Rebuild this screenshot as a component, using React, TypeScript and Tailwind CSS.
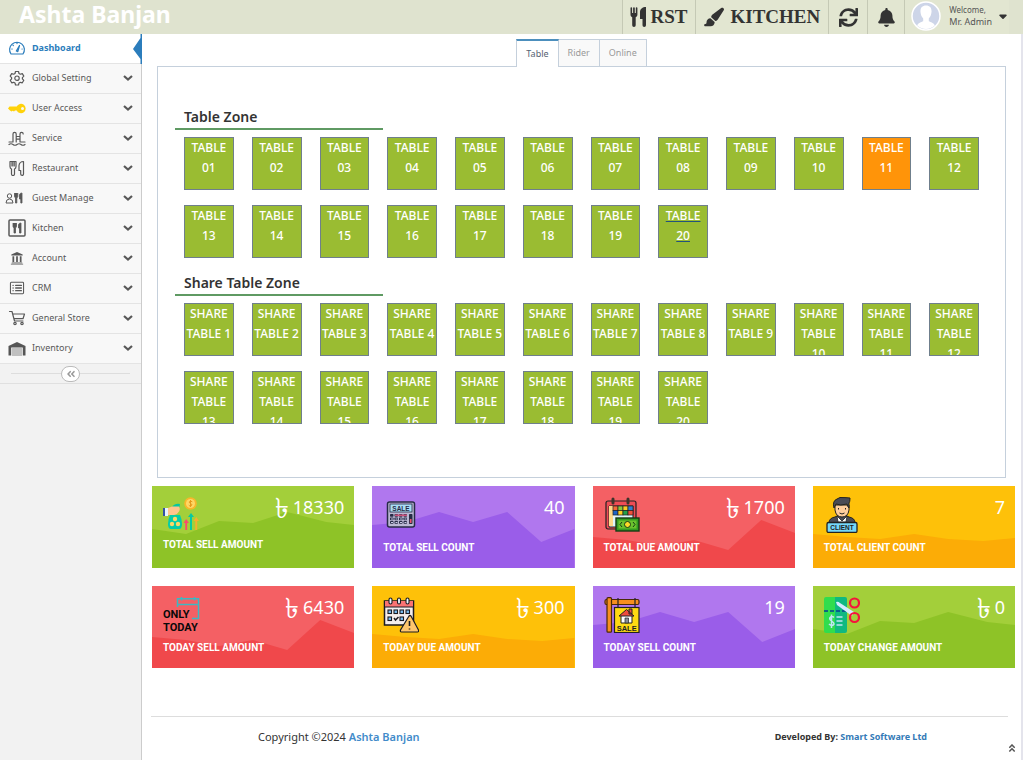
import { useState, type ReactNode } from "react";
import { FaBell, FaCaretDown, FaPaintbrush } from "react-icons/fa6";
import { FaAngleDoubleLeft, FaAngleDoubleUp, FaSync } from "react-icons/fa";

type IconProps = { className?: string };

function Cutlery({ className }: IconProps) {
  return (
    <svg viewBox="0 0 17 20" className={className} fill="currentColor" aria-hidden="true">
      <path d="M.5 1a.8.8 0 0 1 1.600 0v5h1V1a.8.8 0 0 1 1.700 0v5h1V1a.8.8 0 0 1 1.600 0v6.500c0 1.400-.7 2.300-1.700 2.800v7.900a1.700 1.700 0 0 1-3.500 0v-7.900C1.200 9.800.5 8.900.5 7.500z" />
      <path d="M10 5c0-3 2.500-5 6-5v18.200a1.700 1.700 0 0 1-3.500 0V12H10z" />
    </svg>
  );
}

function Chevron({ className }: IconProps) {
  return (
    <svg viewBox="0 0 10 6" className={className} fill="none" stroke="currentColor" strokeWidth="2.200" aria-hidden="true">
      <path d="M1 1l4 3.500L9 1" />
    </svg>
  );
}

function LineIcon({ children, className = "h-4 w-4" }: { children: ReactNode; className?: string }) {
  return (
    <svg
      viewBox="0 0 18 16"
      className={className}
      fill="none"
      stroke="currentColor"
      strokeWidth="1.200"
      strokeLinecap="round"
      strokeLinejoin="round"
      aria-hidden="true"
    >
      {children}
    </svg>
  );
}

const navIcons: Record<string, ReactNode> = {
  Dashboard: (
    <LineIcon className="h-4 w-[18px]">
      <path d="M4 14H3A7.400 7.400 0 1 1 15 14H4M9 3v.6M3.800 9h.4M5 5.200l.3.300M14 9h.2" />
      <path d="M8.300 11 11.500 5.500 9.800 11.600z" />
    </LineIcon>
  ),
  "Global Setting": (
    <LineIcon className="h-4 w-[18px]">
      <path d="M7.500 1.500h3l.5 2 1.300.7 2-.6 1.500 2.500-1.400 1.500v1.300l1.400 1.400-1.500 2.500-2-.5-1.300.7-.5 2h-3l-.5-2-1.300-.7-2 .5-1.500-2.500 1.400-1.400V7.600L2.200 6.100l1.500-2.500 2 .6L7 3.500z" />
      <circle cx="9" cy="8.200" r="2.200" />
    </LineIcon>
  ),
  "User Access": (
    <svg viewBox="0 0 18 16" className="h-4 w-[18px]" fill="#ffd20a" aria-hidden="true">
      <path
        fillRule="evenodd"
        d="M8.700 6.500A4.700 4.700 0 1 1 8.700 10.500L7 10.500 6 11.500 4.700 10.800 3.500 11.500 2 10.500 0 8.600 1.500 6.500zM14.500 7a1.500 1.500 0 1 0 0 3 1.500 1.500 0 0 0 0-3z"
      />
    </svg>
  ),
  Service: (
    <LineIcon className="h-4 w-[18px]">
      <path d="M5 5.500V4a1.600 1.600 0 0 1 3.200 0v8M12 5.500V4a1.600 1.600 0 0 1 3.200 0M12 4.500V12M8.200 6.500H12M8.200 9.200H12M5 5.500V12M1 12h4M1 14.500q2-1.500 4 0t4 0 4 0 4 0M12 12h5" />
    </LineIcon>
  ),
  Restaurant: (
    <LineIcon className="h-4 w-[18px]">
      <path d="M2 1.500v5q0 2 1.500 2.500V14a1.500 1.500 0 0 0 3 0V9Q8 8.500 8 6.500v-5H6.200V6H6V1.500H4.200V6H4V1.500zM15.500 1.500V14a1.400 1.400 0 0 1-2.800 0v-3.500H11V5.500q.5-4 4.500-4z" />
    </LineIcon>
  ),
  "Guest Manage": (
    <svg viewBox="0 0 18 14" className="-ml-[3px] h-[14px] w-[18px]" fill="none" stroke="currentColor" aria-hidden="true">
      <circle cx="4.500" cy="5" r="2.200" />
      <path d="M1 12q0-4 3.500-4T8 12z" />
      <path
        d="M9.500 2v3.500q0 1 1 1.200V12h1.300V6.700q1-.2 1-1.200V2M11.200 2v4M14.500 8V3.500Q15 2 17 2v10h-1.200V8z"
        fill="currentColor"
        strokeWidth=".8"
      />
    </svg>
  ),
  Kitchen: (
    <svg viewBox="0 0 18 18" className="h-[18px] w-[18px]" fill="none" stroke="currentColor" aria-hidden="true">
      <rect x="1" y="1" width="16" height="16" rx="1" strokeWidth="1.500" />
      <path
        d="M5 4v3.500q0 1 1 1.200V14h1.500V8.700q1-.2 1-1.200V4M6.700 4v4M10.500 9V5.500Q11 4 13 4v10h-1.500V9z"
        fill="currentColor"
        strokeWidth=".8"
      />
    </svg>
  ),
  Account: (
    <svg viewBox="0 0 16 16" className="h-[14px] w-[18px]" fill="currentColor" aria-hidden="true">
      <path d="M8 1 14.500 4v1.200h-13V4zM2.800 6h2v6.500h-2zM7 6h2v6.500H7zM11.200 6h2v6.500h-2zM2 13h12v1H2zM1 14.500h14v1H1z" />
    </svg>
  ),
  CRM: (
    <LineIcon className="h-[14px] w-[18px]">
      <rect x="1.500" y="1.500" width="15" height="13" rx="1" />
      <path d="M4.500 5h.1M7.500 5H14M4.500 8h.1M7.500 8H14M4.500 11h.1M7.500 11H14" strokeWidth="1.500" />
    </LineIcon>
  ),
  "General Store": (
    <LineIcon className="h-4 w-[18px]">
      <path d="M1.500 1.500H4l2.500 9.500H15M4.700 4H16.500L15 8.700H6" />
      <circle cx="7" cy="13.500" r="1.200" />
      <circle cx="14" cy="13.500" r="1.200" />
    </LineIcon>
  ),
  Inventory: (
    <svg viewBox="0 0 18 15" className="h-[15px] w-[18px]" aria-hidden="true">
      <path d="M9 1 17.500 5v9.500h-2.700V6.500H3.200v8H.5V5z" fill="#555" />
      <path d="M4 8h10M4 10h10M4 12h10M4 14h10" stroke="#888" />
    </svg>
  ),
};

function Sidebar() {
  return (
    <aside className="w-[142px] shrink-0 border-r border-[#ccc] bg-[#f2f2f2]">
      <nav aria-label="Main">
        <ul>
          {Object.keys(navIcons).map((label) => {
            const active = label === "Dashboard";
            return (
              <li key={label} className="border-b border-[#e4e4e4]">
                <a
                  href="#"
                  className={
                    active
                      ? "relative flex h-[29px] items-center bg-white pb-px pl-2 text-[9px] font-bold text-[#2b7dbc]"
                      : "flex h-[29px] items-center bg-[#f8f8f8] pr-2 pb-px pl-2 text-[9px] text-[#585858]"
                  }
                >
                  <span className="flex w-6 shrink-0 items-center">{navIcons[label]}</span>
                  <span className="flex-1">{label}</span>
                  {active ? (
                    <svg
                      viewBox="0 0 9 30"
                      className="absolute top-0 -right-px h-[30px] w-[9px]"
                      fill="#2b7dbc"
                      aria-hidden="true"
                    >
                      <path d="M7.500 0H9v30H7.500V25L0 15 7.500 4z" />
                    </svg>
                  ) : (
                    <Chevron className="h-[6px] w-[10px]" />
                  )}
                </a>
              </li>
            );
          })}
        </ul>
      </nav>
      <div className="flex h-5 items-center border-b border-[#e0e0e0] px-[11px]">
        <span className="h-px flex-1 bg-[#ddd]" />
        <button
          type="button"
          aria-label="Collapse sidebar"
          className="flex h-4 w-[19px] items-center justify-center rounded-full border border-[#bbb] bg-white text-[#999]"
        >
          <FaAngleDoubleLeft className="h-[10px] w-[10px]" />
        </button>
        <span className="h-px flex-1 bg-[#ddd]" />
      </div>
    </aside>
  );
}

function Header() {
  const serif =
    "flex items-center gap-1 border-l border-[#c5c9b5] pl-[7px] pr-2 font-['Liberation_Serif',serif] text-[19px] font-bold";
  return (
    <header className="flex h-[34px] items-stretch bg-[#dfe3cf] pr-[14px] text-[#333]">
      <a href="#" className="pl-[19px] text-[23px] leading-7 font-bold text-white">
        Ashta Banjan
      </a>
      <div className="ml-auto flex items-stretch bg-[#e2e6d1]">
        <a href="#" className={serif}>
          <Cutlery className="h-5 w-[17px]" />
          RST
        </a>
        <a href="#" className={serif}>
          <FaPaintbrush className="mr-[2px] h-5 w-[21px]" />
          KITCHEN
        </a>
        <button type="button" aria-label="Refresh" className="flex w-[39px] items-center justify-center border-l border-[#c5c9b5]">
          <FaSync className="h-[19px] w-[19px]" />
        </button>
        <button type="button" aria-label="Notifications" className="flex w-[37px] items-center justify-center border-l border-[#c5c9b5]">
          <FaBell className="h-[19px] w-[17px]" />
        </button>
        <button type="button" className="flex items-center border-l border-[#c5c9b5] pb-[2px] pl-[6px] text-left text-[9px] leading-3 text-[#555]">
          <svg viewBox="0 0 30 30" className="mr-2 h-[30px] w-[30px]" aria-hidden="true">
            <circle cx="15" cy="15" r="14" fill="#cdd5e8" stroke="#fff" strokeWidth="1.500" />
            <path
              d="M15 4.500c-4 0-5.800 2.600-5.500 6.500.2 3 1.400 5.200 2.700 6.500v2.700c-2 1-5 1.500-6 4.300a13 13 0 0 0 17.600 0c-1-2.800-4-3.300-6-4.300v-2.700c1.300-1.300 2.500-3.500 2.700-6.500.3-3.900-1.500-6.500-5.500-6.500z"
              fill="#fff"
            />
          </svg>
          <span>
            <span className="block text-[8px]">Welcome,</span>
            <span className="block">Mr. Admin</span>
          </span>
          <FaCaretDown className="ml-[5px] h-3 w-3 text-[#333]" />
        </button>
      </div>
    </header>
  );
}

function Zone({ title, tables, busy, hovered }: { title: string; tables: string[]; busy?: number; hovered?: number }) {
  return (
    <section>
      <h2 className="flex h-[23px] w-[208px] items-start border-b-2 border-[#5f9a63] pl-[9px] text-sm leading-5 font-semibold text-[#333]">
        {title}
      </h2>
      <div className="mt-[7px] grid grid-cols-12 gap-y-[15px]">
        {tables.map((name, i) => (
          <div key={name} className="px-[9px]">
            <a
              href="#"
              className={`block h-[53px] overflow-hidden border border-[#6f7f8c] text-center text-xs leading-5 font-medium text-white ${
                i === busy ? "bg-[#ff9409]" : "bg-[#9abc32]"
              } ${i === hovered ? "underline decoration-[#23527c]" : ""}`}
            >
              {name}
            </a>
          </div>
        ))}
      </div>
    </section>
  );
}

const waves = {
  green: { bg: "bg-[#a3cf3a]", fill: "#8ec327", d: "M0 43 34 48 67 35 101 37 135 26 174 36 202 39V82H0z" },
  purple: { bg: "bg-[#b077ee]", fill: "#9a5de9", d: "M0 39 34 36 67 26 101 36 135 26 169 56 202 43V82H0z" },
  red: { bg: "bg-[#f46064]", fill: "#f0484b", d: "M0 51 34 54 67 60 101 54 135 64 168 34 202 47V82H0z" },
  yellow: { bg: "bg-[#fec109]", fill: "#fcac06", d: "M0 48 34 51 67 53 101 48 135 53 170 55 202 52V82H0z" },
};

function Art({ children, className = "h-9 w-9" }: { children: ReactNode; className?: string }) {
  return (
    <svg viewBox="0 0 36 36" className={className} aria-hidden="true">
      {children}
    </svg>
  );
}

const artText = "font-['Liberation_Sans',sans-serif] font-bold";

const SellAmountArt = (
  <svg viewBox="0 0 36 33" className="h-[33px] w-9" aria-hidden="true">
    <circle cx="27.500" cy="6.500" r="6.300" fill="#f8b62b" />
    <circle cx="27.500" cy="6.500" r="4.500" fill="#ffd766" />
    <path d="M29.300 4.800q-1.800-1.300-3 0c-.8 1.600 3 1.700 2.700 3.200-.7 1.400-2.500 1-3.200.2M27.500 3v7" fill="none" stroke="#e79a1c" />
    <path d="M9 10q3-4 8-3l-1 5z" fill="#05c7a0" />
    <path d="M0 11h3v8H0z" fill="#3452a3" />
    <path d="M2 11h3v8H2z" fill="#e7f3ff" />
    <path d="M5 11l4-1.500h7q1.500 2.500 0 5-1.500 3-5 3.500L5 18z" fill="#ffc58c" />
    <path d="M7 18h10q2 4 2 9 0 5-3 5H8q-3 0-3-5 0-5 2-9z" fill="#04cda7" />
    <g fill="#fbd867">
      <circle cx="12" cy="22" r="2.200" />
      <circle cx="9" cy="27" r="2.200" />
      <circle cx="15" cy="27" r="2.200" />
    </g>
    <path d="M22.300 33V26h-1.800l2.700-4 2.700 4h-1.800v7z" fill="#fb4b6e" />
    <path d="M27 33V20h-2l3-4 3 4h-2v13z" fill="#07c9a2" />
    <path d="M32.300 33V24h-1.800l2.800-4 2.700 4h-1.800v9z" fill="#f6ae2e" />
  </svg>
);

const CalculatorArt = (
  <Art>
    <rect x="4.500" y="5" width="27" height="25" rx="2" fill="#bbb8d3" stroke="#272b46" strokeWidth="1.500" />
    <rect x="7" y="7" width="22" height="8" fill="#a9ddf4" stroke="#272b46" strokeWidth=".8" />
    <text x="18" y="13.500" textAnchor="middle" fontSize="6.500" className={artText} fill="#272b46">
      SALE
    </text>
    <g fill="#272b46">
      {[17, 20.5, 24].map((y) =>
        [7, 11.5, 16, 20.5].map((x) => <rect key={`${x}-${y}`} x={x} y={y} width="3.500" height="2.800" rx=".7" />),
      )}
      <rect x="26" y="17" width="3.500" height="10" rx=".7" />
    </g>
    <path d="M12 18.300h12" stroke="#c9527b" strokeWidth="1.700" />
    <path d="M27.700 22v4" stroke="#e8526f" strokeWidth="1.700" />
    <path d="M8 22h2M12.500 22h2M17 22h2M21.500 22h2M8 25.500h2M12.500 25.500h2M17 25.500h2M21.500 25.500h2" stroke="#c6c9e4" />
  </Art>
);

const DueCalendarArt = (
  <Art>
    <rect x="2" y="4" width="30" height="28" rx="2" fill="#ef4c55" stroke="#222" strokeWidth="1.200" />
    <path d="M5 9h24v21H5z" fill="#dff5fb" stroke="#222" />
    <path d="M5 9h4v20H5z" fill="#ffd989" />
    <g stroke="#222" strokeWidth=".7">
      {[0, 1, 2, 3].map((i) => (
        <g key={i}>
          <rect x={9 + i * 5} y="9" width="5" height="4.500" fill={["#f26b38", "#87c740", "#f9ca24", "#2f80d1"][i]} />
          <rect x={9 + i * 5} y="13.500" width="5" height="4.500" fill={["#1c65c7", "#ffce23", "#24a04a", "#ee4f3a"][i]} />
        </g>
      ))}
    </g>
    <path d="M9 2v4M24 2v4" stroke="#3f342b" strokeWidth="3" strokeLinecap="round" />
    <rect x="12" y="21" width="23" height="13" fill="#349c20" stroke="#143b15" strokeWidth="1.400" />
    <rect x="14.500" y="23.500" width="18" height="8" fill="#6bc22d" />
    <path d="m18 25-2 2.500 2 2.500M29 25l2 2.500-2 2.500" fill="none" stroke="#143b15" />
    <circle cx="23.500" cy="27.500" r="3" fill="#ffda29" stroke="#143b15" />
  </Art>
);

const ClientArt = (
  <Art>
    <path d="M5 26q0-5 6-6l4-2h6l4 2q6 1 6 6z" fill="#4b4c55" stroke="#222" />
    <path d="m13 19 5 5 5-5-1 6h-8z" fill="#fff" stroke="#222" strokeWidth=".8" />
    <path d="M11 8h14v5q-1 7-7 7t-7-7z" fill="#ffce9c" stroke="#222" />
    <path d="M10 11Q8 4 13 2l3-1.500q7 0 10 .5 0 4-1 5v5q-2-2-2-4-7 2-11 0z" fill="#494b56" stroke="#222" />
    <path d="M14.500 11v1.500M21.500 11v1.500M15.500 16q2.500 2 5 0" stroke="#222" fill="none" />
    <rect x="3" y="25.500" width="30" height="10" rx="1.500" fill="#75d8fa" stroke="#222" strokeWidth="1.300" />
    <text x="18" y="33" textAnchor="middle" fontSize="6.500" className={artText} fill="#222">
      CLIENT
    </text>
  </Art>
);

const narrowText = "font-['Roboto',sans-serif] font-bold";

const OnlyTodayArt = (
  <svg viewBox="0 0 38 36" className="h-9 w-[38px]" aria-hidden="true">
    <path d="M14.500 10V1.800H35.500V21.500H29M14.500 7.500H35.500M18.500 0v3.500M31.500 0v3.500" fill="none" stroke="#3cb8c2" strokeWidth="1.500" />
    <text x="0" y="21" fontSize="11" className={narrowText} fill="#090909">
      ONLY
    </text>
    <text x="0" y="34" fontSize="11" className={narrowText} fill="#090909">
      TODAY
    </text>
  </svg>
);

const WarningCalendarArt = (
  <Art>
    <path d="M1.500 4h29v24h-29z" fill="#f5eeee" stroke="#1b1b22" strokeWidth="1.500" />
    <path d="M2 4h28v6H2z" fill="#fb7373" />
    <path d="M1.500 10h29" stroke="#1b1b22" />
    <g fill="#eaf5ff" stroke="#1b1b22" strokeWidth="1.100">
      <rect x="6" y="1" width="3" height="6" rx="1.500" />
      <rect x="14.500" y="1" width="3" height="6" rx="1.500" />
      <rect x="23" y="1" width="3" height="6" rx="1.500" />
    </g>
    <g fill="#79bff6" stroke="#1b1b22" strokeWidth="1.100">
      {[5, 11, 17, 23].map((x) => (
        <rect key={x} x={x} y="13" width="3.500" height="3.500" />
      ))}
      <rect x="5" y="20" width="3.500" height="3.500" />
      <rect x="17" y="20" width="3.500" height="3.500" />
    </g>
    <path d="m11 21 1.500 2 3-3" fill="none" stroke="#1b1b22" strokeWidth="1.500" />
    <path d="M26 19q1-1 2 0l7.500 14q.5 2-1 2H18.500q-1.500 0-1-2z" fill="#ffc66d" stroke="#1b1b22" strokeWidth="1.200" />
    <path d="M26.500 24v5M26.500 31.500v1" stroke="#1b1b22" strokeWidth="1.600" />
  </Art>
);

const SaleSignArt = (
  <Art>
    <rect x="1" y="2.500" width="34" height="5" rx="1.500" fill="#f78f1e" stroke="#4a2909" strokeWidth="1.200" />
    <rect x="3" y="0.700" width="4.500" height="34.500" rx="1" fill="#f78f1e" stroke="#4a2909" strokeWidth="1.200" />
    <path d="M14 1v10M31 1v10" stroke="#222" strokeWidth="1.200" />
    <rect x="10.500" y="10.500" width="24.500" height="25" fill="#ffda12" stroke="#222" strokeWidth="1.200" />
    <path d="M17 18h11v8H17z" fill="#fff" stroke="#222" />
    <path d="M25 12h3v5h-3zM15 19l7.500-6.500L30 19z" fill="#ef4d3c" stroke="#222" />
    <path d="M21 21h3.500v5H21z" fill="#858c98" stroke="#222" strokeWidth=".7" />
    <text x="22.700" y="34" textAnchor="middle" fontSize="7.500" className={artText} fill="#222">
      SALE
    </text>
  </Art>
);

const CouponArt = (
  <Art>
    <path d="M2 0h9v36H2q-2 0-2-2V2q0-2 2-2z" fill="#31dd4d" />
    <path d="M11 0h10q2 0 2 2v32q0 2-2 2H11z" fill="#0fb981" />
    <path d="M0 14h4M6 14h4M12 14h4M18 14h4" stroke="#063f93" strokeWidth="1.700" />
    <path d="M12 5q2-1 4 1l14 9-2 4-15-11z" fill="#d5ebff" />
    <g fill="none" stroke="#f5133c" strokeWidth="2.200">
      <circle cx="30.500" cy="6" r="4.500" />
      <circle cx="30.500" cy="20.500" r="4.500" />
    </g>
    <path
      d="M10 20.500q-2-2-4 0c-2 3 4 3.500 4 6.500q-2 3-5 0M7.500 17.500V31M12.500 20h6M12.500 24h6M12.500 28h6"
      fill="none"
      stroke="#bfe4f4"
      strokeWidth="1.500"
    />
  </Art>
);

type Stat = { label: string; value: string; taka: boolean; tone: keyof typeof waves; art: ReactNode };

const stats: Stat[] = [
  { label: "TOTAL SELL AMOUNT", value: "18330", taka: true, tone: "green", art: SellAmountArt },
  { label: "TOTAL SELL COUNT", value: "40", taka: false, tone: "purple", art: CalculatorArt },
  { label: "TOTAL DUE AMOUNT", value: "1700", taka: true, tone: "red", art: DueCalendarArt },
  { label: "TOTAL CLIENT COUNT", value: "7", taka: false, tone: "yellow", art: ClientArt },
  { label: "TODAY SELL AMOUNT", value: "6430", taka: true, tone: "red", art: OnlyTodayArt },
  { label: "TODAY DUE AMOUNT", value: "300", taka: true, tone: "yellow", art: WarningCalendarArt },
  { label: "TODAY SELL COUNT", value: "19", taka: false, tone: "purple", art: SaleSignArt },
  { label: "TODAY CHANGE AMOUNT", value: "0", taka: true, tone: "green", art: CouponArt },
];

function StatCard({ label, value, taka, tone, art }: Stat) {
  const wave = waves[tone];
  return (
    <article className={`relative h-[82px] text-white ${wave.bg}`}>
      <svg viewBox="0 0 202 82" preserveAspectRatio="none" className="absolute inset-0 h-full w-full" aria-hidden="true">
        <path d={wave.d} fill={wave.fill} />
      </svg>
      <div className="relative flex items-start justify-between pt-[11px] pr-[10px] pl-[11px]">
        <div>
          {art}
          <h3 className="mt-2 font-['Roboto',sans-serif] text-[10px] leading-[14px] font-bold whitespace-nowrap">{label}</h3>
        </div>
        <p className="flex items-center gap-1 text-lg leading-5">
          {taka && <span className="text-[28px] leading-5">৳</span>}
          {value}
        </p>
      </div>
    </article>
  );
}

const tables = Array.from({ length: 20 }, (_, i) => `TABLE ${String(i + 1).padStart(2, "0")}`);
const shareTables = Array.from({ length: 20 }, (_, i) => `SHARE TABLE ${i + 1}`);

export default function App() {
  const [tab, setTab] = useState("Table");
  return (
    <div className="flex min-h-screen flex-col bg-white font-['Noto_Sans',sans-serif]">
      <Header />
      <div className="flex flex-1">
        <Sidebar />
        <div className="flex min-w-0 flex-1 flex-col border-r-2 border-[#e4e4ec]">
          <main className="pt-[5px]">
            <div role="tablist" className="flex justify-center">
              {["Table", "Rider", "Online"].map((name) => (
                <button
                  key={name}
                  type="button"
                  role="tab"
                  aria-selected={tab === name}
                  onClick={() => setTab(name)}
                  className={
                    tab === name
                      ? "relative -mb-px h-7 border-x border-t-2 border-[#c5d0dc] border-t-[#4c8fbd] bg-white px-[9px] text-[9px] text-[#576373]"
                      : "h-[27px] border-t border-r border-[#c5d0dc] bg-[#f9f9f9] px-[9px] text-[9px] text-[#999]"
                  }
                >
                  {name}
                </button>
              ))}
            </div>
            <div className="mr-[15px] ml-[15px] border border-[#c5d0dc] px-[17px] pt-10 pb-[53px]">
              <Zone title="Table Zone" tables={tables} busy={10} hovered={19} />
              <div className="h-[15px]" />
              <Zone title="Share Table Zone" tables={shareTables} />
            </div>
            <div className="mt-2 grid grid-cols-4 gap-[18px] pr-[6px] pl-[10px]">
              {stats.map((stat) => (
                <StatCard key={stat.label} {...stat} />
              ))}
            </div>
          </main>
          <footer className="mt-12 mr-[13px] ml-[9px] flex items-center justify-between border-t border-[#ddd] pt-[10px] pr-[81px] pl-[107px] text-[#333]">
            <p className="text-[11px] leading-5">
              Copyright ©2024{" "}
              <a href="#" className="font-semibold text-[#428bca]">
                Ashta Banjan
              </a>
            </p>
            <p className="text-[9px] leading-5 font-bold">
              Developed By:{" "}
              <a href="#" className="text-[#337ab7]">
                Smart Software Ltd
              </a>
            </p>
          </footer>
          <a href="#" aria-label="Back to top" className="-mt-1 mr-1 self-end text-[#555]">
            <FaAngleDoubleUp className="h-[10px] w-[10px]" />
          </a>
        </div>
      </div>
    </div>
  );
}
